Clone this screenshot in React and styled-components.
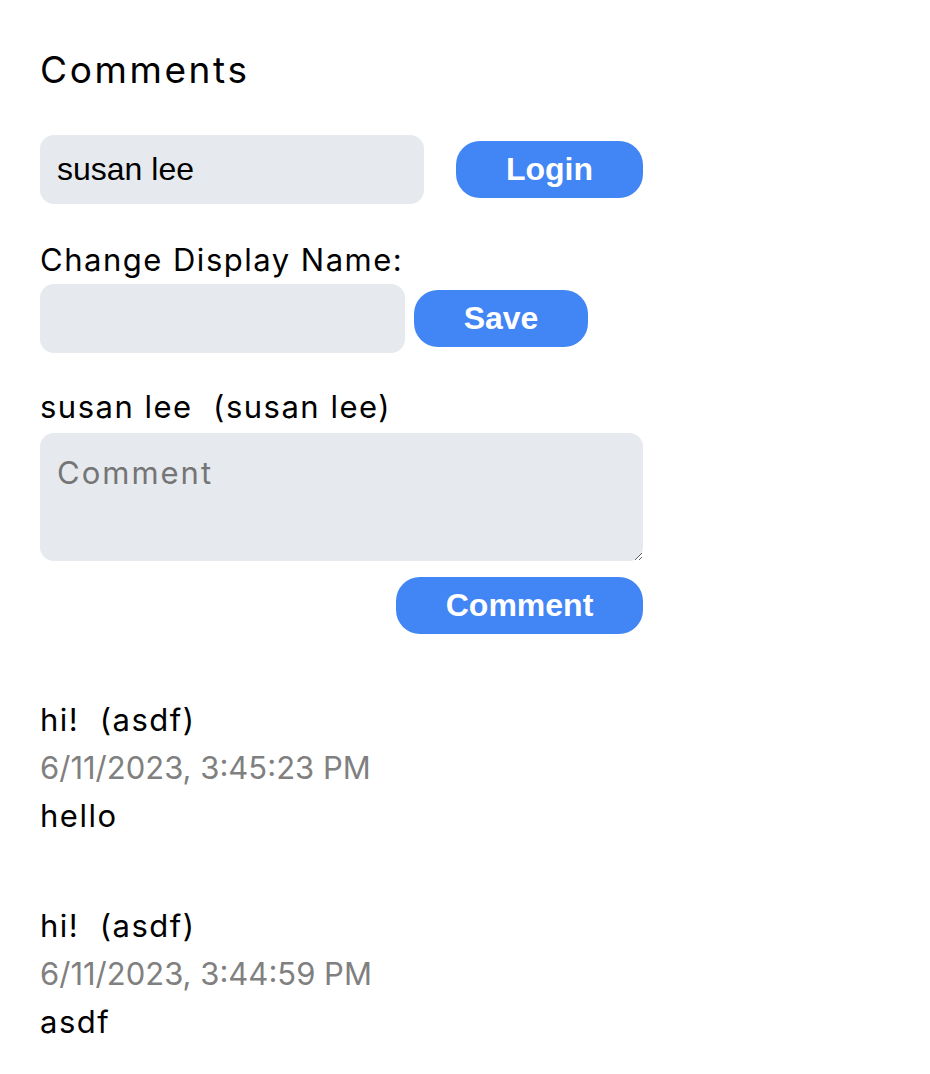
import styled, { createGlobalStyle } from "styled-components";

const GlobalStyle = createGlobalStyle`
  body {
    margin: 0;
    background: #fff;
    font-family: Inter, "Noto Sans", sans-serif;
    color: #000;
  }
`;

const comments = [
  { name: "hi!", user: "asdf", date: "6/11/2023, 3:45:23 PM", text: "hello" },
  { name: "hi!", user: "asdf", date: "6/11/2023, 3:44:59 PM", text: "asdf" },
];

const Page = styled.div`
  padding: 44px 40px 40px;
  width: 603px;
  display: flex;
  flex-direction: column;
`;

const Title = styled.h2`
  margin: 0 0 39px;
  font-size: 37px;
  font-weight: 400;
  letter-spacing: 2.6px;
  line-height: 52px;
`;

const Row = styled.div`
  display: flex;
  align-items: center;
  gap: ${(p) => p.$gap}px;
`;

const Field = styled.input`
  box-sizing: border-box;
  width: ${(p) => p.$width}px;
  height: 69px;
  border: none;
  border-radius: 14px;
  background: #e6eaee;
  padding: 0 17px;
  font-family: "Liberation Sans", Arial, sans-serif;
  font-size: 32px;
  color: #000;
  outline: none;
`;

const Button = styled.button`
  box-sizing: border-box;
  width: ${(p) => p.$width}px;
  height: 57px;
  border: none;
  border-radius: 24px;
  background: #4285f4;
  color: #fff;
  font-family: "Liberation Sans", Arial, sans-serif;
  font-weight: 700;
  font-size: 32px;
  cursor: pointer;
`;

const Label = styled.div`
  font-size: 31px;
  letter-spacing: 1.5px;
  line-height: 48px;
  margin: ${(p) => p.$margin || "0"};
  white-space: pre;
`;

const TextArea = styled.textarea`
  box-sizing: border-box;
  width: 603px;
  height: 128px;
  border: none;
  border-radius: 14px;
  background: #e6eaee;
  padding: 18px 17px;
  font-family: Inter, "Noto Sans", sans-serif;
  font-size: 31px;
  letter-spacing: 2px;
  line-height: 44px;
  resize: vertical;
  outline: none;
  &::placeholder {
    color: #757575;
  }
`;

const Actions = styled.div`
  display: flex;
  justify-content: flex-end;
  margin-top: 16px;
`;

const List = styled.div`
  display: flex;
  flex-direction: column;
  gap: 62px;
  margin-top: 62px;
`;

const Item = styled.div`
  display: flex;
  flex-direction: column;
`;

const Line = styled.div`
  font-size: 31px;
  line-height: 48px;
  letter-spacing: ${(p) => (p.$muted ? "0" : "1.5px")};
  color: ${(p) => (p.$muted ? "#808080" : "#000")};
  white-space: pre;
`;

export default function App() {
  return (
    <>
      <GlobalStyle />
      <Page>
        <Title>Comments</Title>
        <Row $gap={32}>
          <Field $width={384} defaultValue="susan lee" />
          <Button $width={187}>Login</Button>
        </Row>
        <Label $margin="32px 0 0">Change Display Name:</Label>
        <Row $gap={9}>
          <Field $width={365} />
          <Button $width={174}>Save</Button>
        </Row>
        <Label $margin="30px 0 2px">{"susan lee  (susan lee)"}</Label>
        <TextArea placeholder="Comment" />
        <Actions>
          <Button $width={247}>Comment</Button>
        </Actions>
        <List>
          {comments.map((c, i) => (
            <Item key={i}>
              <Line>{`${c.name}  (${c.user})`}</Line>
              <Line $muted>{c.date}</Line>
              <Line>{c.text}</Line>
            </Item>
          ))}
        </List>
      </Page>
    </>
  );
}
